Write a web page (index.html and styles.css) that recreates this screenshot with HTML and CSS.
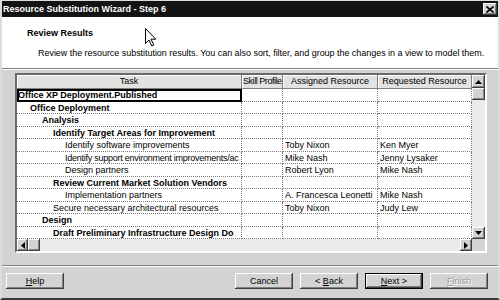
FILE: index.html
```html
<!DOCTYPE html>
<html lang="en">
<head>
    <meta charset="UTF-8">
    <title>Resource Substitution Wizard - Step 6</title>
    <link rel="stylesheet" href="styles.css">
</head>
<body>
    <div class="window">
        <div class="titlebar">
            <span class="title">Resource Substitution Wizard - Step 6</span>
            <span class="close-btn">
                <svg width="8" height="7" viewBox="0 0 8 7"><path d="M0.5 0.5 L7.5 6.5 M7.5 0.5 L0.5 6.5" stroke="#000" stroke-width="1.6"/></svg>
            </span>
        </div>

        <div class="header">
            <div class="heading">Review Results</div>
            <div class="desc">Review the resource substitution results. You can also sort, filter, and group the changes in a view to model them.</div>
        </div>
        <div class="sep"></div>

        <div class="main">
            <div class="gridbox">
                <div class="gridtop">
                    <div class="sheet">
                        <div class="row head">
                            <div class="hcell">Task</div>
                            <div class="hcell narrow">Skill Profile</div>
                            <div class="hcell">Assigned Resource</div>
                            <div class="hcell">Requested Resource</div>
                        </div>
                        <!-- filas de tareas -->
                        <div class="row">
                            <div class="cell l0 b focus">Office XP Deployment.Published</div>
                            <div class="cell"></div><div class="cell"></div><div class="cell"></div>
                        </div>
                        <div class="row">
                            <div class="cell l1 b">Office Deployment</div>
                            <div class="cell"></div><div class="cell"></div><div class="cell"></div>
                        </div>
                        <div class="row">
                            <div class="cell l2 b">Analysis</div>
                            <div class="cell"></div><div class="cell"></div><div class="cell"></div>
                        </div>
                        <div class="row">
                            <div class="cell l3 b">Identify Target Areas for Improvement</div>
                            <div class="cell"></div><div class="cell"></div><div class="cell"></div>
                        </div>
                        <div class="row">
                            <div class="cell l4">Identify software improvements</div>
                            <div class="cell"></div><div class="cell">Toby Nixon</div><div class="cell">Ken Myer</div>
                        </div>
                        <div class="row">
                            <div class="cell l4 tight">Identify support environment improvements/ac</div>
                            <div class="cell"></div><div class="cell">Mike Nash</div><div class="cell">Jenny Lysaker</div>
                        </div>
                        <div class="row">
                            <div class="cell l4">Design partners</div>
                            <div class="cell"></div><div class="cell">Robert Lyon</div><div class="cell">Mike Nash</div>
                        </div>
                        <div class="row">
                            <div class="cell l3 b">Review Current Market Solution Vendors</div>
                            <div class="cell"></div><div class="cell"></div><div class="cell"></div>
                        </div>
                        <div class="row">
                            <div class="cell l4">Implementation partners</div>
                            <div class="cell"></div><div class="cell">A. Francesca Leonetti</div><div class="cell">Mike Nash</div>
                        </div>
                        <div class="row">
                            <div class="cell l3">Secure necessary architectural resources</div>
                            <div class="cell"></div><div class="cell">Toby Nixon</div><div class="cell">Judy Lew</div>
                        </div>
                        <div class="row">
                            <div class="cell l2 b">Design</div>
                            <div class="cell"></div><div class="cell"></div><div class="cell"></div>
                        </div>
                        <div class="row">
                            <div class="cell l3 b">Draft Preliminary Infrastructure Design Do</div>
                            <div class="cell"></div><div class="cell"></div><div class="cell"></div>
                        </div>
                    </div>
                    <div class="vscroll">
                        <div class="sbtn up"><svg width="7" height="4" viewBox="0 0 7 4"><polygon points="3.5,0 7,4 0,4" fill="#000"/></svg></div>
                        <div class="thumb"></div>
                        <div class="track"></div>
                        <div class="sbtn down"><svg width="7" height="4" viewBox="0 0 7 4"><polygon points="0,0 7,0 3.5,4" fill="#000"/></svg></div>
                    </div>
                </div>
                <div class="hbar">
                    <div class="hscroll">
                        <div class="sbtn left"><svg width="4" height="7" viewBox="0 0 4 7"><polygon points="0,3.5 4,0 4,7" fill="#000"/></svg></div>
                        <div class="thumb"></div>
                        <div class="track"></div>
                        <div class="sbtn right"><svg width="4" height="7" viewBox="0 0 4 7"><polygon points="0,0 4,3.5 0,7" fill="#000"/></svg></div>
                    </div>
                    <div class="corner"></div>
                </div>
            </div>
        </div>

        <div class="sep"></div>
        <div class="footer">
            <button class="btn"><u>H</u>elp</button>
            <div class="spacer"></div>
            <button class="btn">Cancel</button>
            <button class="btn">&lt; <u>B</u>ack</button>
            <button class="btn default"><u>N</u>ext &gt;</button>
            <button class="btn disabled"><u>F</u>inish</button>
        </div>

        <svg class="cursor" width="12" height="19" viewBox="0 0 12 19">
            <path d="M0.5 0.5 L0.5 15.5 L4 12 L6.8 18 L8.8 17 L6 11.2 L10.8 11.2 Z" fill="#fff" stroke="#000" stroke-width="1"/>
        </svg>
    </div>
</body>
</html>
```

FILE: styles.css
```css
* {
    box-sizing: border-box;
}

body {
    margin: 0;
    font-family: "Liberation Sans", Arial, sans-serif;
    font-size: 9px;
    color: #000;
    background: #d3d3d3;
}

.window {
    position: relative;
    width: 500px;
    height: 300px;
    display: flex;
    flex-direction: column;
    background: #d3d3d3;
    border-left: 2px solid #dcdcdc;
    border-right: 2px solid #dcdcdc;
    border-top: 1px solid #dcdcdc;
    border-bottom: 2px solid #3a3a3a;
}

.titlebar {
    height: 16px;
    flex: none;
    display: flex;
    align-items: center;
    justify-content: space-between;
    padding: 0 1px 0 1px;
    background: #141414;
}

.title {
    color: #fff;
    font-weight: bold;
    font-size: 9px;
}

.close-btn {
    width: 14px;
    height: 12px;
    display: flex;
    align-items: center;
    justify-content: center;
    background: #d3d3d3;
    box-shadow: inset -1px -1px #404040, inset 1px 1px #fff, inset -2px -2px #808080;
}

.header {
    height: 51px;
    flex: none;
    background: #fff;
    padding: 11px 0 0 25px;
    line-height: 11px;
}

.heading {
    font-weight: bold;
}

.desc {
    margin-top: 9px;
    padding-left: 11px;
    white-space: nowrap;
    letter-spacing: -0.04px;
}

.sep {
    height: 2px;
    flex: none;
    border-top: 1px solid #808080;
    border-bottom: 1px solid #fff;
}

.main {
    height: 195px;
    flex: none;
    padding: 3px 0 0 13px;
}

.gridbox {
    width: 472px;
    height: 180px;
    border: 2px solid;
    border-color: #6a6a6a #fff #fff #6a6a6a;
    display: flex;
    flex-direction: column;
}

.gridtop {
    display: flex;
    height: 164px;
}

.sheet {
    width: 455px;
    background: #fff;
}

.row {
    display: grid;
    grid-template-columns: 225px 41px 95px 94px;
    height: 12.5px;
}

.row.head {
    height: 14px;
    background: #e2e2e2;
}

.hcell {
    text-align: center;
    line-height: 13px;
    white-space: nowrap;
    overflow: hidden;
    border-right: 1px solid #808080;
    border-bottom: 1px solid #808080;
    box-shadow: inset 1px 1px #fff;
}

.hcell.narrow {
    letter-spacing: -0.45px;
    text-align: left;
    padding-left: 1px;
}

.cell {
    white-space: nowrap;
    overflow: hidden;
    line-height: 12px;
    padding-left: 2px;
    border-right: 1px dotted #7a7a7a;
    border-bottom: 1px dotted #7a7a7a;
}

.cell.tight {
    letter-spacing: -0.25px;
}

.b {
    font-weight: bold;
}

.l0 { padding-left: 1px; }
.l1 { padding-left: 13px; }
.l2 { padding-left: 25px; }
.l3 { padding-left: 36px; }
.l4 { padding-left: 48px; }

.focus {
    outline: 2px solid #000;
    outline-offset: -2px;
    border-right: none;
}

.vscroll {
    width: 13px;
    display: flex;
    flex-direction: column;
}

.sbtn {
    flex: none;
    display: flex;
    align-items: center;
    justify-content: center;
    background: #d3d3d3;
    box-shadow: inset -1px -1px #404040, inset 1px 1px #fff, inset -2px -2px #808080;
}

.vscroll .sbtn {
    height: 13px;
}

.vscroll .down {
    height: 12px;
}

.thumb {
    flex: none;
    background: #d3d3d3;
    box-shadow: inset -1px -1px #404040, inset 1px 1px #fff, inset -2px -2px #808080;
}

.vscroll .thumb {
    height: 12px;
}

.track {
    flex: 1;
    background: #ebebeb;
}

.hbar {
    display: flex;
    height: 12px;
}

.hscroll {
    width: 455px;
    display: flex;
}

.hscroll .sbtn {
    width: 11px;
}

.hscroll .right {
    width: 12px;
}

.hscroll .thumb {
    width: 12px;
}

.corner {
    width: 13px;
    background: #d3d3d3;
}

.footer {
    flex: 1;
    display: flex;
    gap: 7px;
    padding: 6px 10px 0 4px;
}

.spacer {
    flex: 1;
}

.btn {
    width: 58px;
    height: 16px;
    padding: 0;
    font-family: inherit;
    font-size: 9px;
    color: #000;
    background: #d3d3d3;
    border: none;
    box-shadow: inset -1px -1px #404040, inset 1px 1px #fff, inset -2px -2px #808080;
}

.btn.default {
    border: 1px solid #000;
}

.btn.disabled {
    color: #9a9a9a;
    text-shadow: 1px 1px #fff;
}

.cursor {
    position: absolute;
    left: 143px;
    top: 27px;
}
```
